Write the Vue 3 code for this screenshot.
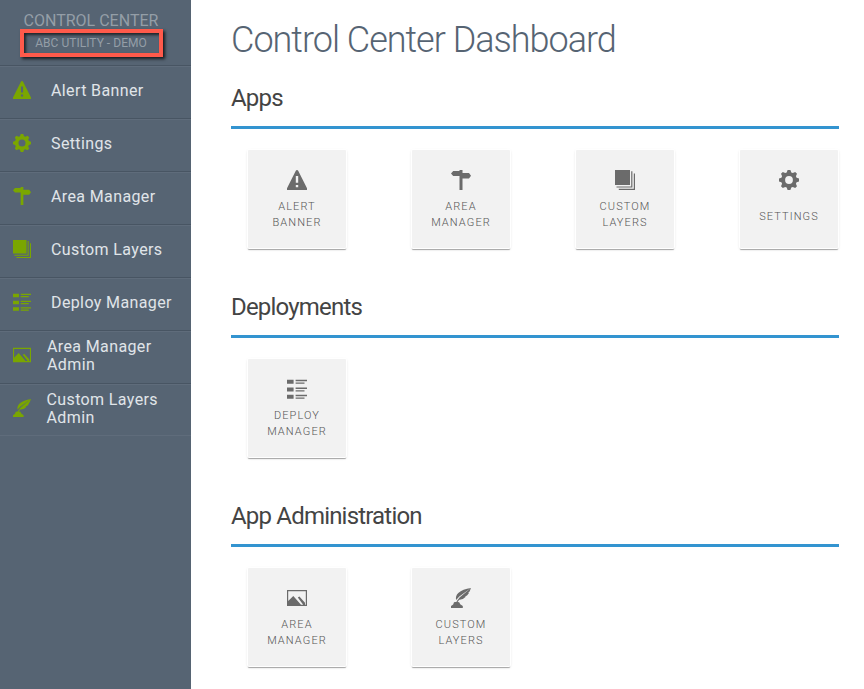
<script setup>
import { h } from 'vue'

const paths = {
  alert: 'M10 0Q10.8 0 11.2.8L20 18.2V20H0V18.2L8.8.8Q9.2 0 10 0ZM8.8 6V12.7H11.2V6ZM8.8 15V17.3H11.2V15Z',
  gear: 'M8.6 0H11.4L12.3 2.4L13.8 3.1L16.2 2L18 3.8L16.9 6.2L17.6 7.7L20 8.6V11.4L17.6 12.3L16.9 13.8L18 16.2L16.2 18L13.8 16.9L12.3 17.6L11.4 20H8.6L7.7 17.6L6.2 16.9L3.8 18L2 16.2L3.1 13.8L2.4 12.3L0 11.4V8.6L2.4 7.7L3.1 6.2L2 3.8L3.8 2L6.2 3.1L7.7 2.4ZM10 6.1A3.9 3.9 0 1 0 10 13.9A3.9 3.9 0 1 0 10 6.1Z',
  sign: 'M8.5 0H11.5V3H18L20 5.8L18 8.6H11.5V20H8.5V6H2.2L0 3.5L2.2 1H8.5Z',
  layers: 'M0 0H15V15H0ZM16.2 1.2H17.4V17.6H1.5V16.4H16.2ZM18.8 3.5H20V20H3.8V18.8H18.8Z',
  list: 'M0 .8H6.6V4.8H0ZM8.6 .8H20V2.3H8.6ZM8.6 3.4H17.5V4.8H8.6ZM0 8.6H6.6V12.6H0ZM8.6 8.6H20V10.1H8.6ZM8.6 11.2H17.5V12.6H8.6ZM0 15.8H6.6V19.8H0ZM8.6 15.8H20V17.3H8.6ZM8.6 18.4H17.5V19.8H8.6Z',
  picture: 'M0 2H20V18H0ZM1.2 3.2V16.8H18.8V3.2ZM1.2 13L6.3 7.9L14 16.8H1.2ZM10.8 9.6L12.4 8.6L18 14.8V16.8H16.2Z',
  quill: 'M0 20V18L2.2 16.4L3 14.2Q5 13.3 8.2 14.2L9.2 16.2L11.8 18V20ZM20 0L8.3 8.4L5.1 11.9Q4.2 8 7.3 5Q11.6 1.2 20 0ZM20 0L18.6 3.6L17.2 4.8L18 5L16 7.6L14 8.4L14.8 8.8Q11.8 12 8.2 11.7L6.6 14H5.1L8.8 9.2Z'
}

const Icon = (props) =>
  h('svg', { viewBox: '0 0 20 20', 'aria-hidden': 'true' }, [
    h('path', { d: paths[props.name], fill: 'currentColor', 'fill-rule': 'evenodd' })
  ])
Icon.props = ['name']

const menu = [
  { icon: 'alert', label: 'Alert Banner' },
  { icon: 'gear', label: 'Settings' },
  { icon: 'sign', label: 'Area Manager' },
  { icon: 'layers', label: 'Custom Layers' },
  { icon: 'list', label: 'Deploy Manager' },
  { icon: 'picture', label: 'Area Manager Admin', wrap: 'area' },
  { icon: 'quill', label: 'Custom Layers Admin', wrap: 'custom' }
]

const sections = [
  {
    title: 'Apps',
    tiles: [
      { icon: 'alert', lines: ['Alert', 'Banner'] },
      { icon: 'sign', lines: ['Area', 'Manager'] },
      { icon: 'layers', lines: ['Custom', 'Layers'] },
      { icon: 'gear', lines: ['Settings'] }
    ]
  },
  { title: 'Deployments', tiles: [{ icon: 'list', lines: ['Deploy', 'Manager'] }] },
  {
    title: 'App Administration',
    tiles: [
      { icon: 'picture', lines: ['Area', 'Manager'] },
      { icon: 'quill', lines: ['Custom', 'Layers'] }
    ]
  }
]
</script>

<template>
  <div class="page">
    <aside class="sidebar">
      <header class="brand">
        <div class="brand-name">CONTROL CENTER</div>
        <div class="tenant">ABC UTILITY - DEMO</div>
      </header>
      <nav>
        <a v-for="m in menu" :key="m.label" class="item" :class="m.wrap">
          <Icon :name="m.icon" class="item-icon" />
          <span class="item-label">{{ m.label }}</span>
        </a>
      </nav>
    </aside>
    <main class="content">
      <h1>Control Center Dashboard</h1>
      <section v-for="s in sections" :key="s.title">
        <h2>{{ s.title }}</h2>
        <div class="tiles">
          <a v-for="t in s.tiles" :key="t.icon" class="tile">
            <Icon :name="t.icon" class="tile-icon" />
            <span class="tile-label" :class="{ single: t.lines.length === 1 }">
              <span v-for="l in t.lines" :key="l">{{ l }}</span>
            </span>
          </a>
        </div>
      </section>
    </main>
  </div>
</template>

<style>
body { background: #fff; overflow: hidden; }
</style>

<style scoped>
.page { display: flex; height: 689px; overflow: hidden; font-family: Roboto, "Liberation Sans", sans-serif; }
.sidebar { flex: none; width: 191px; background: #566473; color: #e0e5e9; }
.brand { box-sizing: border-box; height: 66px; padding-top: 13px; border-bottom: 1px solid #485563; color: #949ea7; display: flex; flex-direction: column; align-items: center; }
.brand-name { font-size: 16px; line-height: 16px; white-space: nowrap; padding-right: 9px; }
.tenant { box-sizing: border-box; width: 143px; height: 28px; margin-right: 8px; padding-right: 1px; border: 4px solid #ff5a4b; font-size: 12px; font-weight: 400; line-height: 20px; letter-spacing: .03px; text-align: center; white-space: nowrap; box-shadow: 2px 2px 3px rgba(0, 0, 0, .75), inset 2px 2px 3px rgba(0, 0, 0, .65); }
.item { box-sizing: border-box; height: 53px; display: flex; align-items: center; padding: 0 10px 3px 13px; border-top: 1px solid #5f6c7b; border-bottom: 1px solid #485563; }
.item:last-child { border-bottom-color: #5f6c7b; height: 52px; }
.item-icon { flex: none; width: 18px; height: 18px; margin-bottom: 2px; color: #7aa600; }
.item-label { margin-left: 20px; font-size: 16px; line-height: 18px; letter-spacing: .38px; }
.area .item-label { margin-left: 16px; }
.custom .item-label { margin-left: 15.5px; }
.content { flex: none; width: 608px; padding-left: 40px; }
h1 { margin: 0; padding-top: 17px; height: 46px; font-size: 36px; font-weight: 300; line-height: 46px; letter-spacing: -1px; color: #566473; white-space: nowrap; }
section { height: 209px; }
section:first-of-type { margin-top: 17px; }
h2 { box-sizing: border-box; margin: 0; height: 49px; border-bottom: 3px solid #3394d0; font-size: 24px; font-weight: 400; line-height: 36px; letter-spacing: -.81px; color: #444; }
.tiles { display: flex; gap: 66px; padding: 21px 0 0 17px; }
.tile { flex: none; width: 98px; height: 98px; background: #f2f2f2; border-radius: 1px; box-shadow: 0 0 0 1px #fff, 0 2px 1px rgba(0, 0, 0, .3), 0 1px 3px rgba(0, 0, 0, .22); display: flex; flex-direction: column; align-items: center; color: #6b6b6b; }
.tile-icon { flex: none; width: 20px; height: 20px; margin-top: 20px; }
.tile-label { height: 32px; margin-top: 9px; display: flex; flex-direction: column; justify-content: center; text-align: center; text-transform: uppercase; font-size: 11px; font-weight: 300; line-height: 16px; letter-spacing: 1.1px; color: #555; }
.tile-label.single { margin-top: 11px; }
</style>
